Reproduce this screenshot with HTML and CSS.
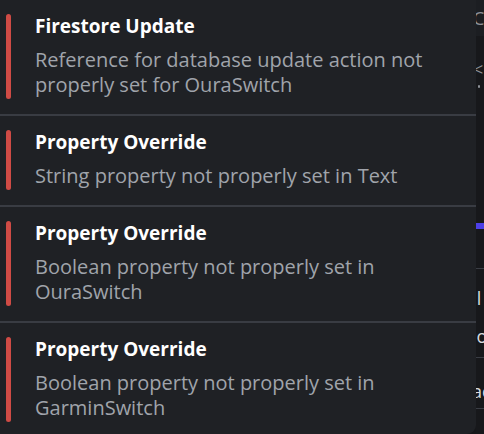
FILE: index.html
```html
<!DOCTYPE html>
<html lang="en">
<head>
    <meta charset="UTF-8">
    <meta name="viewport" content="width=device-width, initial-scale=1.0">
    <title>Issues</title>
    <link rel="stylesheet" href="styles.css">
</head>
<body>
    <div class="page">
        <div class="issues">
            <div class="issue">
                <div class="bar"></div>
                <div class="issue-text">
                    <div class="issue-title">Firestore Update</div>
                    <div class="issue-desc">Reference for database update action not properly set for OuraSwitch</div>
                </div>
            </div>
            <div class="issue">
                <div class="bar"></div>
                <div class="issue-text">
                    <div class="issue-title">Property Override</div>
                    <div class="issue-desc">String property not properly set in Text</div>
                </div>
            </div>
            <div class="issue">
                <div class="bar"></div>
                <div class="issue-text">
                    <div class="issue-title">Property Override</div>
                    <div class="issue-desc">Boolean property not properly set in OuraSwitch</div>
                </div>
            </div>
            <div class="issue">
                <div class="bar"></div>
                <div class="issue-text">
                    <div class="issue-title">Property Override</div>
                    <div class="issue-desc">Boolean property not properly set in GarminSwitch</div>
                </div>
            </div>
        </div>

        <!-- bit of the app showing behind the popover -->
        <div class="behind">
            <div class="behind-top">
                <div class="behind-icon">C</div>
            </div>
            <div class="behind-chev">&lt;</div>
            <div class="behind-dot"></div>
            <div class="behind-accent"></div>
            <div class="behind-row tall">
                <div>&middot;l</div>
                <div>lo</div>
            </div>
            <div class="behind-row short">ac</div>
            <div class="behind-row"></div>
        </div>
    </div>
</body>
</html>
```

FILE: styles.css
```css
body {
    margin: 0;
    padding: 0;
    background: #16171a;
    font-family: "Open Sans", "Noto Sans", sans-serif;
}

.page {
    display: flex;
    width: 484px;
    height: 434px;
    overflow: hidden;
}

.issues {
    width: 476px;
    flex-shrink: 0;
    background: #1f2125;
    border-radius: 0 0 9px 0;
}

.issue {
    display: flex;
    gap: 24px;
    padding: 14px 30px 15px 6px;
    border-bottom: 2px solid #393c43;
}

.issue:last-child {
    border-bottom: none;
}

.bar {
    width: 5px;
    flex-shrink: 0;
    background: #cf4b45;
    border-radius: 3px;
}

.issue-text {
    padding-bottom: 2px;
}

.issue-title {
    color: #ffffff;
    font-weight: 700;
    font-size: 19px;
    line-height: 24px;
    margin-bottom: 9px;
}

.issue-desc {
    color: #a0a4ab;
    font-size: 20px;
    line-height: 25px;
}

.behind {
    flex: 1;
    background: #17181b;
    color: #d9dbdf;
    font-size: 18px;
    overflow: hidden;
    white-space: nowrap;
}

.behind-top {
    height: 36px;
    background: #1c1e22;
    padding-top: 8px;
    box-sizing: border-box;
}

.behind-icon {
    height: 20px;
    line-height: 20px;
    margin-left: -3px;
    color: #8d9097;
}

.behind-chev {
    margin-top: 22px;
    height: 22px;
    line-height: 22px;
    margin-left: -3px;
    color: #8d9097;
}

/* small dot under the chevron */
.behind-dot {
    width: 2px;
    height: 3px;
    margin: 5px 0 0 2px;
    background: #8d9097;
    border-radius: 1px;
}

.behind-accent {
    margin-top: 135px;
    height: 6px;
    background: #4d3fe8;
}

.behind-row {
    border-top: 1px solid #3a3d44;
    margin-left: -4px;
}

.behind-row.tall {
    margin-top: 39px;
    height: 89px;
    padding-top: 10px;
    line-height: 38px;
    box-sizing: border-box;
}

.behind-row.short {
    height: 51px;
    padding-top: 18px;
    line-height: 30px;
    box-sizing: border-box;
}
```
